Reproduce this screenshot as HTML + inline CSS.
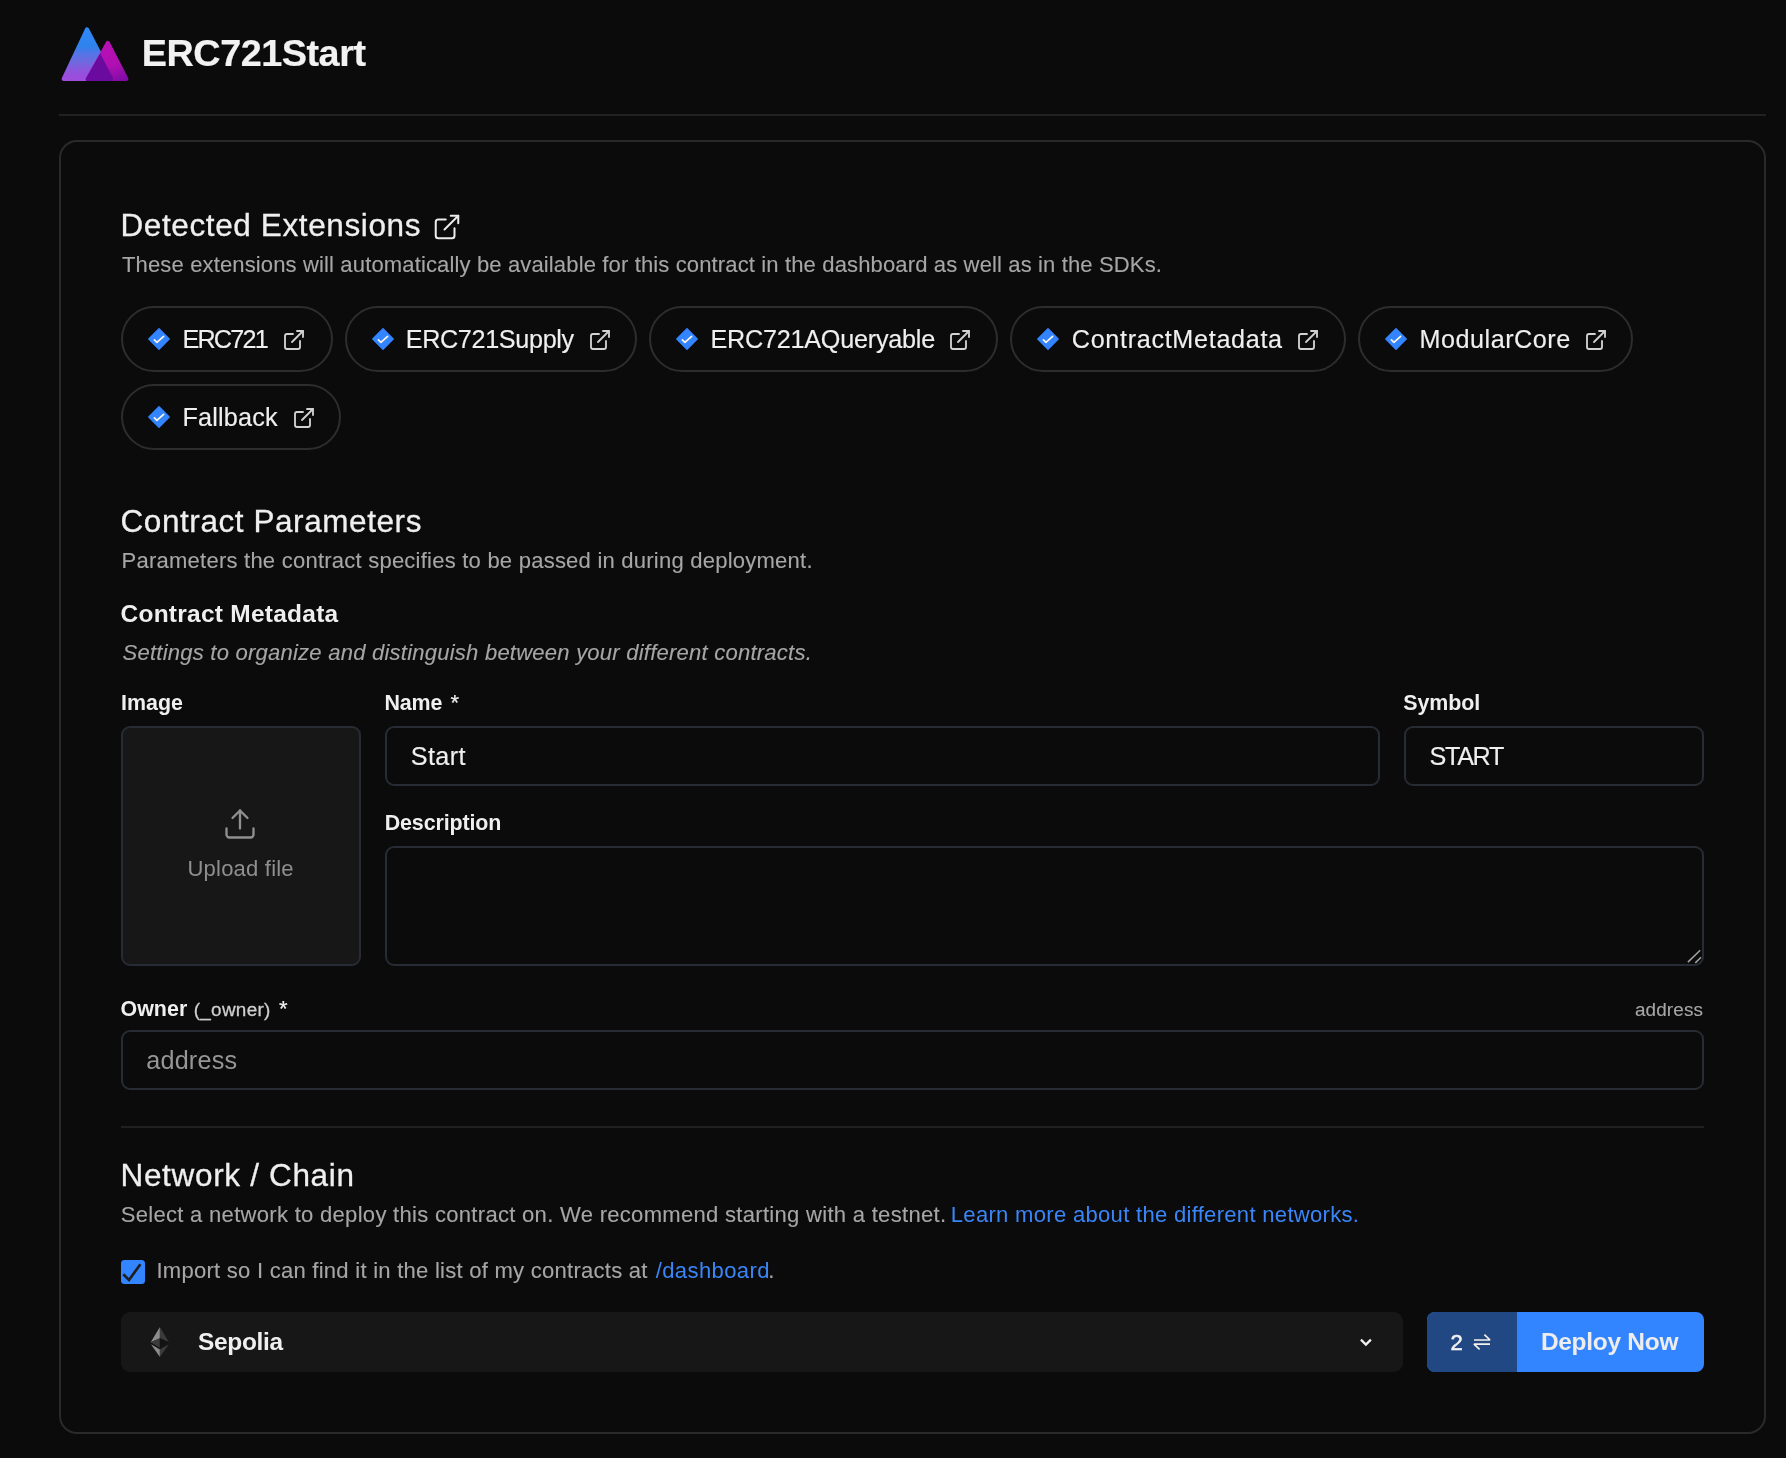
<!DOCTYPE html>
<html lang="en">
<head>
<meta charset="utf-8">
<title>ERC721Start</title>
<style>
html,body{margin:0;padding:0;background:#0b0b0b;}
body{width:1786px;height:1458px;position:relative;overflow:hidden;font-family:"Liberation Sans",sans-serif;}
.t{position:absolute;display:block;margin:0;padding:0;white-space:nowrap;font-family:"Liberation Sans",sans-serif;text-decoration:none;}
.a{position:absolute;box-sizing:border-box;}
.pill{border:2px solid #2d2d2d;border-radius:33px;height:66px;}
.inp{border:2px solid #272b33;border-radius:9px;background:#0b0b0b;}
svg{position:absolute;overflow:visible;}
#txt{position:absolute;left:0;top:0;width:1786px;height:1458px;will-change:transform;}

</style>
</head>
<body>
<!-- header -->
<svg style="left:0;top:0" width="200" height="100" viewBox="0 0 200 100">
  <defs>
    <linearGradient id="g1" x1="0" y1="27" x2="0" y2="81" gradientUnits="userSpaceOnUse"><stop offset="0" stop-color="#2f8afa"/><stop offset="0.36" stop-color="#2f82ec"/><stop offset="0.5" stop-color="#5674e6"/><stop offset="0.63" stop-color="#6c6ae0"/><stop offset="0.8" stop-color="#8c56dc"/><stop offset="0.92" stop-color="#9c4cdc"/><stop offset="1" stop-color="#9e4cdc"/></linearGradient>
    <linearGradient id="g2" x1="100" y1="40" x2="118" y2="84" gradientUnits="userSpaceOnUse"><stop offset="0" stop-color="#b80fb4"/><stop offset="0.6" stop-color="#b010b2"/><stop offset="1" stop-color="#7a0ca4"/></linearGradient>
  </defs>
  <path d="M87.04 29.5 L112.8 78.9 L63.73 78.9 Z" fill="url(#g1)" stroke="url(#g1)" stroke-width="4.2" stroke-linejoin="round"/>
  <path d="M107.78 43.0 L126.31 78.9 L88.13 78.9 Z" fill="url(#g2)" stroke="url(#g2)" stroke-width="4.2" stroke-linejoin="round"/>
  <path d="M100.2 53.6 L112.4 76.8 Q114.2 80.9 110 81 L87.3 81 Q84.6 80.6 86 78 Z" fill="#6a0a9e"/>
</svg>
<div class="a" style="left:59px;top:114px;width:1707px;height:2px;background:#212121"></div>
<!-- card -->
<div class="a" style="left:59px;top:140px;width:1707px;height:1294px;border:2px solid #2a2a2a;border-radius:18px"></div>
<!-- heading external link icon -->
<svg style="left:432.2px;top:211.9px" width="30" height="30" viewBox="0 0 24 24" fill="none" stroke="#ececec" stroke-width="1.62" stroke-linecap="round" stroke-linejoin="round"><path d="M18 13v6a2 2 0 0 1-2 2H5a2 2 0 0 1-2-2V8a2 2 0 0 1 2-2h6"/><path d="M15 3h6v6"/><path d="M10 14L21 3"/></svg>
<!-- extension pills -->
<div class="a pill" style="left:121px;top:306px;width:212px"></div>
<svg style="left:147.0px;top:327.1px" width="24" height="24" viewBox="-12 -12 24 24"><path d="M0 -10.2 L10.2 0 L0 10.2 L-10.2 0 Z" fill="#3385ff" stroke="#3385ff" stroke-width="1.4" stroke-linejoin="round"/><path d="M-4.6 0.9 L-2.1 3.3 L4.6 -2.7" fill="none" stroke="#fdf6e8" stroke-width="1.7" stroke-linecap="round" stroke-linejoin="round"/></svg>
<svg style="left:282px;top:327.8px" width="24" height="24" viewBox="0 0 24 24" fill="none" stroke="#d2d2d2" stroke-width="1.85" stroke-linecap="round" stroke-linejoin="round"><path d="M18 13v6a2 2 0 0 1-2 2H5a2 2 0 0 1-2-2V8a2 2 0 0 1 2-2h6"/><path d="M15 3h6v6"/><path d="M10 14L21 3"/></svg>
<div class="a pill" style="left:345px;top:306px;width:292px"></div>
<svg style="left:371.0px;top:327.1px" width="24" height="24" viewBox="-12 -12 24 24"><path d="M0 -10.2 L10.2 0 L0 10.2 L-10.2 0 Z" fill="#3385ff" stroke="#3385ff" stroke-width="1.4" stroke-linejoin="round"/><path d="M-4.6 0.9 L-2.1 3.3 L4.6 -2.7" fill="none" stroke="#fdf6e8" stroke-width="1.7" stroke-linecap="round" stroke-linejoin="round"/></svg>
<svg style="left:587.9px;top:327.8px" width="24" height="24" viewBox="0 0 24 24" fill="none" stroke="#d2d2d2" stroke-width="1.85" stroke-linecap="round" stroke-linejoin="round"><path d="M18 13v6a2 2 0 0 1-2 2H5a2 2 0 0 1-2-2V8a2 2 0 0 1 2-2h6"/><path d="M15 3h6v6"/><path d="M10 14L21 3"/></svg>
<div class="a pill" style="left:649px;top:306px;width:349px"></div>
<svg style="left:675.0px;top:327.1px" width="24" height="24" viewBox="-12 -12 24 24"><path d="M0 -10.2 L10.2 0 L0 10.2 L-10.2 0 Z" fill="#3385ff" stroke="#3385ff" stroke-width="1.4" stroke-linejoin="round"/><path d="M-4.6 0.9 L-2.1 3.3 L4.6 -2.7" fill="none" stroke="#fdf6e8" stroke-width="1.7" stroke-linecap="round" stroke-linejoin="round"/></svg>
<svg style="left:948px;top:327.8px" width="24" height="24" viewBox="0 0 24 24" fill="none" stroke="#d2d2d2" stroke-width="1.85" stroke-linecap="round" stroke-linejoin="round"><path d="M18 13v6a2 2 0 0 1-2 2H5a2 2 0 0 1-2-2V8a2 2 0 0 1 2-2h6"/><path d="M15 3h6v6"/><path d="M10 14L21 3"/></svg>
<div class="a pill" style="left:1010px;top:306px;width:336px"></div>
<svg style="left:1036.0px;top:327.1px" width="24" height="24" viewBox="-12 -12 24 24"><path d="M0 -10.2 L10.2 0 L0 10.2 L-10.2 0 Z" fill="#3385ff" stroke="#3385ff" stroke-width="1.4" stroke-linejoin="round"/><path d="M-4.6 0.9 L-2.1 3.3 L4.6 -2.7" fill="none" stroke="#fdf6e8" stroke-width="1.7" stroke-linecap="round" stroke-linejoin="round"/></svg>
<svg style="left:1296px;top:327.8px" width="24" height="24" viewBox="0 0 24 24" fill="none" stroke="#d2d2d2" stroke-width="1.85" stroke-linecap="round" stroke-linejoin="round"><path d="M18 13v6a2 2 0 0 1-2 2H5a2 2 0 0 1-2-2V8a2 2 0 0 1 2-2h6"/><path d="M15 3h6v6"/><path d="M10 14L21 3"/></svg>
<div class="a pill" style="left:1358px;top:306px;width:275px"></div>
<svg style="left:1384.0px;top:327.1px" width="24" height="24" viewBox="-12 -12 24 24"><path d="M0 -10.2 L10.2 0 L0 10.2 L-10.2 0 Z" fill="#3385ff" stroke="#3385ff" stroke-width="1.4" stroke-linejoin="round"/><path d="M-4.6 0.9 L-2.1 3.3 L4.6 -2.7" fill="none" stroke="#fdf6e8" stroke-width="1.7" stroke-linecap="round" stroke-linejoin="round"/></svg>
<svg style="left:1584px;top:327.8px" width="24" height="24" viewBox="0 0 24 24" fill="none" stroke="#d2d2d2" stroke-width="1.85" stroke-linecap="round" stroke-linejoin="round"><path d="M18 13v6a2 2 0 0 1-2 2H5a2 2 0 0 1-2-2V8a2 2 0 0 1 2-2h6"/><path d="M15 3h6v6"/><path d="M10 14L21 3"/></svg>
<div class="a pill" style="left:121px;top:384px;width:220px"></div>
<svg style="left:147.0px;top:405.1px" width="24" height="24" viewBox="-12 -12 24 24"><path d="M0 -10.2 L10.2 0 L0 10.2 L-10.2 0 Z" fill="#3385ff" stroke="#3385ff" stroke-width="1.4" stroke-linejoin="round"/><path d="M-4.6 0.9 L-2.1 3.3 L4.6 -2.7" fill="none" stroke="#fdf6e8" stroke-width="1.7" stroke-linecap="round" stroke-linejoin="round"/></svg>
<svg style="left:292px;top:405.8px" width="24" height="24" viewBox="0 0 24 24" fill="none" stroke="#d2d2d2" stroke-width="1.85" stroke-linecap="round" stroke-linejoin="round"><path d="M18 13v6a2 2 0 0 1-2 2H5a2 2 0 0 1-2-2V8a2 2 0 0 1 2-2h6"/><path d="M15 3h6v6"/><path d="M10 14L21 3"/></svg>
<!-- form fields -->
<div class="a inp" style="left:121px;top:726px;width:240px;height:240px;background:#171717"></div>
<div class="a inp" style="left:385px;top:726px;width:995px;height:60px"></div>
<div class="a inp" style="left:1404px;top:726px;width:300px;height:60px"></div>
<div class="a inp" style="left:385px;top:846px;width:1319px;height:120px"></div>
<div class="a inp" style="left:121px;top:1030px;width:1583px;height:60px"></div>
<div class="a" style="left:121px;top:1126px;width:1583px;height:2px;background:#212121"></div>
<svg style="left:221.95px;top:806.2px" width="36" height="36" viewBox="0 0 24 24" fill="none" stroke="#909090" stroke-width="1.55" stroke-linecap="round" stroke-linejoin="round"><path d="M21 15v4a2 2 0 0 1-2 2H5a2 2 0 0 1-2-2v-4"/><path d="M17 8l-5-5-5 5"/><path d="M12 3v12"/></svg>
<svg style="left:0;top:0" width="1786" height="1000" viewBox="0 0 1786 1000" fill="none" stroke="#a2a2a2" stroke-width="1.5"><path d="M1687.9 962.1 L1700.2 950.3 M1695.3 962.9 L1701.1 957.3"/></svg>
<!-- checkbox -->
<div class="a" style="left:121px;top:1260px;width:24px;height:24px;border-radius:3.5px;background:#3385ff"></div>
<svg style="left:121px;top:1260px" width="24" height="24" viewBox="121 1260 24 24" fill="none" stroke="#1f1f1f" stroke-width="2.7"><path d="M123.3 1274.2 L129 1280 L140.4 1264.2"/></svg>
<!-- network select -->
<div class="a" style="left:121px;top:1312px;width:1282px;height:60px;border-radius:9px;background:#171717"></div>
<svg style="left:140px;top:1320px" width="40" height="44" viewBox="140 1320 40 44">
  <path d="M159.9 1327.1 L150.7 1342.2 L159.9 1338.3 Z" fill="#8c8c8c"/>
  <path d="M159.9 1327.1 L168.9 1342.2 L159.9 1338.3 Z" fill="#3b3b3b"/>
  <path d="M150.7 1342.2 L159.9 1338.3 L159.9 1347.8 Z" fill="#3b3b3b"/>
  <path d="M168.9 1342.2 L159.9 1338.3 L159.9 1347.8 Z" fill="#131313"/>
  <path d="M150.9 1344.2 L159.9 1349.6 L159.9 1356.9 Z" fill="#8c8c8c"/>
  <path d="M168.9 1344.2 L159.9 1349.6 L159.9 1356.9 Z" fill="#3b3b3b"/>
</svg>
<svg style="left:1350px;top:1330px" width="30" height="24" viewBox="1350 1330 30 24" fill="none" stroke="#f0f0f0" stroke-width="2.3"><path d="M1360.9 1339.6 L1365.9 1344.6 L1370.9 1339.6"/></svg>
<!-- deploy button -->
<div class="a" style="left:1427px;top:1312px;width:277px;height:60px;border-radius:8px;background:#3385ff;overflow:hidden"><div style="width:90px;height:60px;background:#214883"></div></div>
<svg style="left:1468px;top:1328px" width="30" height="28" viewBox="1468 1328 30 28" fill="none" stroke="#f6f1ea" stroke-width="1.7" stroke-linejoin="bevel"><path d="M1474 1340 L1490 1340 L1484.4 1334.7 M1490 1344.1 L1474 1344.1 L1479.6 1349.3"/></svg>

<div id="txt">
<h1 class="t" style="left:141.8px;top:28px;font-size:37.8px;line-height:50px;font-weight:700;color:#f2f2f2;letter-spacing:-0.480px;-webkit-text-stroke:0.2px #f2f2f2;">ERC721Start</h1>
<h2 class="t" style="left:120.5px;top:205px;font-size:31.5px;line-height:41px;font-weight:400;color:#efefef;letter-spacing:0.611px;-webkit-text-stroke:0.3px #efefef;">Detected Extensions</h2>
<p class="t" style="left:122.0px;top:250px;font-size:22.05px;line-height:29px;font-weight:400;color:#a6a6a6;letter-spacing:0.123px;-webkit-text-stroke:0.12px #a6a6a6;">These extensions will automatically be available for this contract in the dashboard as well as in the SDKs.</p>
<a class="t" style="left:182.4px;top:323px;font-size:25.2px;line-height:33px;font-weight:400;color:#efefef;letter-spacing:-1.760px;-webkit-text-stroke:0.15px #efefef;">ERC721</a>
<a class="t" style="left:405.7px;top:323px;font-size:25.2px;line-height:33px;font-weight:400;color:#efefef;letter-spacing:-0.336px;-webkit-text-stroke:0.15px #efefef;">ERC721Supply</a>
<a class="t" style="left:710.4px;top:323px;font-size:25.2px;line-height:33px;font-weight:400;color:#efefef;letter-spacing:-0.227px;-webkit-text-stroke:0.15px #efefef;">ERC721AQueryable</a>
<a class="t" style="left:1071.8px;top:323px;font-size:25.2px;line-height:33px;font-weight:400;color:#efefef;letter-spacing:0.673px;-webkit-text-stroke:0.15px #efefef;">ContractMetadata</a>
<a class="t" style="left:1419.6px;top:323px;font-size:25.2px;line-height:33px;font-weight:400;color:#efefef;letter-spacing:0.500px;-webkit-text-stroke:0.15px #efefef;">ModularCore</a>
<a class="t" style="left:182.4px;top:401px;font-size:25.2px;line-height:33px;font-weight:400;color:#efefef;letter-spacing:0.214px;-webkit-text-stroke:0.15px #efefef;">Fallback</a>
<h2 class="t" style="left:120.5px;top:501px;font-size:31.5px;line-height:41px;font-weight:400;color:#efefef;letter-spacing:0.572px;-webkit-text-stroke:0.3px #efefef;">Contract Parameters</h2>
<p class="t" style="left:121.6px;top:546px;font-size:22.05px;line-height:29px;font-weight:400;color:#a6a6a6;letter-spacing:0.216px;-webkit-text-stroke:0.12px #a6a6a6;">Parameters the contract specifies to be passed in during deployment.</p>
<h3 class="t" style="left:120.5px;top:598px;font-size:24.48px;line-height:32px;font-weight:700;color:#efefef;letter-spacing:0.262px;">Contract Metadata</h3>
<p class="t" style="left:122.6px;top:638px;font-size:22.05px;line-height:29px;font-weight:400;color:#a6a6a6;letter-spacing:0.219px;font-style:italic;-webkit-text-stroke:0.12px #a6a6a6;">Settings to organize and distinguish between your different contracts.</p>
<label class="t" style="left:120.9px;top:689px;font-size:21.42px;line-height:28px;font-weight:700;color:#efefef;letter-spacing:0.050px;">Image</label>
<label class="t" style="left:384.5px;top:689px;font-size:21.42px;line-height:28px;font-weight:700;color:#efefef;letter-spacing:-0.133px;">Name</label>
<div class="t" style="left:450.4px;top:688px;font-size:22.05px;line-height:29px;font-weight:400;color:#efefef;letter-spacing:0.000px;-webkit-text-stroke:0.2px #efefef;">*</div>
<label class="t" style="left:1403.2px;top:689px;font-size:21.42px;line-height:28px;font-weight:700;color:#efefef;letter-spacing:-0.040px;">Symbol</label>
<div class="t" style="left:410.7px;top:740px;font-size:25.2px;line-height:33px;font-weight:400;color:#efefef;letter-spacing:0.425px;-webkit-text-stroke:0.15px #efefef;">Start</div>
<div class="t" style="left:1429.6px;top:740px;font-size:25.2px;line-height:33px;font-weight:400;color:#efefef;letter-spacing:-1.375px;-webkit-text-stroke:0.15px #efefef;">START</div>
<div class="t" style="left:187.5px;top:854px;font-size:22.05px;line-height:29px;font-weight:400;color:#8f8f8f;letter-spacing:0.190px;">Upload file</div>
<label class="t" style="left:384.7px;top:809px;font-size:21.42px;line-height:28px;font-weight:700;color:#efefef;letter-spacing:-0.110px;">Description</label>
<label class="t" style="left:120.5px;top:995px;font-size:21.42px;line-height:28px;font-weight:700;color:#efefef;letter-spacing:0.025px;">Owner</label>
<div class="t" style="left:193.7px;top:997px;font-size:18.9px;line-height:25px;font-weight:400;color:#cfcfcf;letter-spacing:0.300px;-webkit-text-stroke:0.3px #cfcfcf;">(_owner)</div>
<div class="t" style="left:278.9px;top:994px;font-size:22.05px;line-height:29px;font-weight:400;color:#efefef;letter-spacing:0.000px;-webkit-text-stroke:0.2px #efefef;">*</div>
<div class="t" style="left:1635.0px;top:997px;font-size:18.9px;line-height:25px;font-weight:400;color:#a6a6a6;letter-spacing:0.117px;-webkit-text-stroke:0.12px #a6a6a6;">address</div>
<div class="t" style="left:146.3px;top:1044px;font-size:25.2px;line-height:33px;font-weight:400;color:#969696;letter-spacing:0.183px;">address</div>
<h2 class="t" style="left:120.5px;top:1155px;font-size:31.5px;line-height:41px;font-weight:400;color:#efefef;letter-spacing:0.671px;-webkit-text-stroke:0.3px #efefef;">Network / Chain</h2>
<p class="t" style="left:120.7px;top:1200px;font-size:22.05px;line-height:29px;font-weight:400;color:#a6a6a6;letter-spacing:0.285px;-webkit-text-stroke:0.12px #a6a6a6;">Select a network to deploy this contract on. We recommend starting with a testnet.</p>
<a class="t" style="left:950.8px;top:1200px;font-size:22.05px;line-height:29px;font-weight:400;color:#3a86f8;letter-spacing:0.295px;">Learn more about the different networks.</a>
<label class="t" style="left:156.4px;top:1256px;font-size:22.05px;line-height:29px;font-weight:400;color:#a6a6a6;letter-spacing:0.249px;-webkit-text-stroke:0.12px #a6a6a6;">Import so I can find it in the list of my contracts at</label>
<a class="t" style="left:655.7px;top:1256px;font-size:22.05px;line-height:29px;font-weight:400;color:#3a86f8;letter-spacing:0.389px;">/dashboard</a>
<div class="t" style="left:768.2px;top:1256px;font-size:22.05px;line-height:29px;font-weight:400;color:#a6a6a6;letter-spacing:0.000px;-webkit-text-stroke:0.12px #a6a6a6;">.</div>
<div class="t" style="left:198.1px;top:1326px;font-size:24.48px;line-height:32px;font-weight:700;color:#efefef;letter-spacing:-0.333px;">Sepolia</div>
<span class="t" style="left:1450.5px;top:1328px;font-size:22.05px;line-height:29px;font-weight:400;color:#f0f0f0;letter-spacing:0.000px;-webkit-text-stroke:0.55px #f0f0f0;">2</span>
<span class="t" style="left:1540.9px;top:1326px;font-size:24.48px;line-height:32px;font-weight:700;color:#ededed;letter-spacing:-0.278px;">Deploy Now</span>
</div>
</body>
</html>
